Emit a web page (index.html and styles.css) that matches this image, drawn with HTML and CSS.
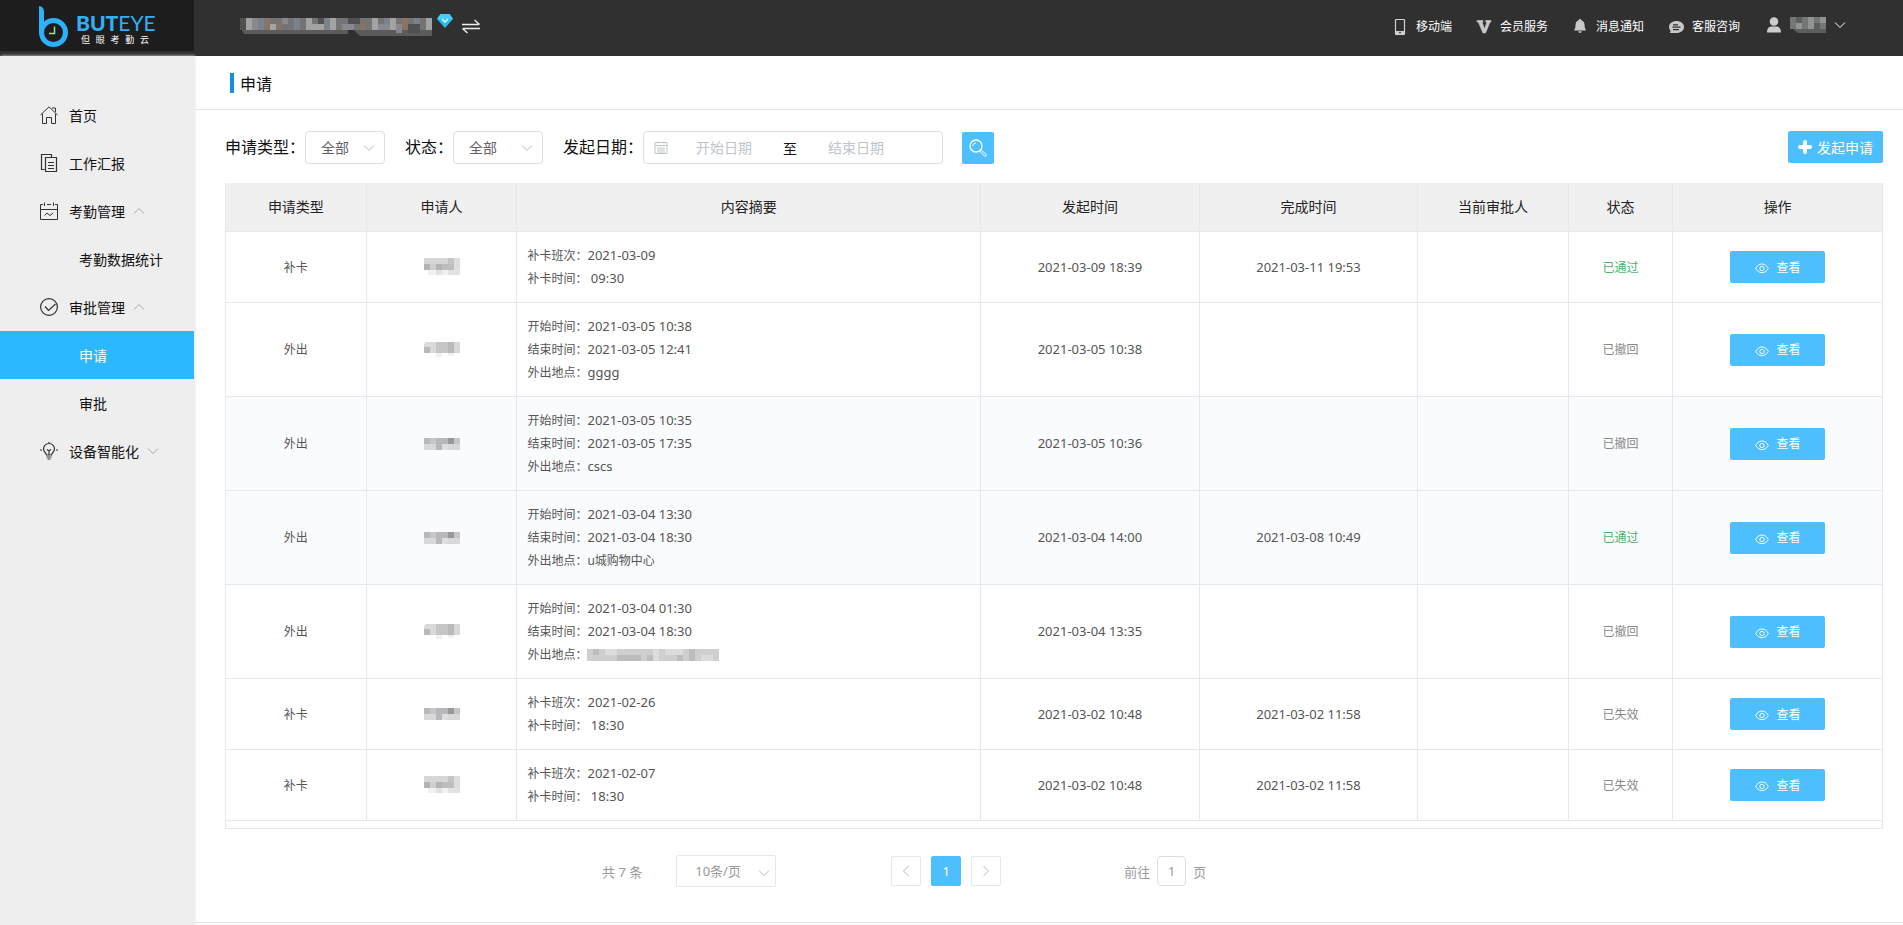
FILE: index.html
```html
<!DOCTYPE html>
<html lang="zh-CN">
<head>
<meta charset="utf-8">
<title>申请</title>
<link rel="stylesheet" href="styles.css">
</head>
<body>
<svg class="defs" aria-hidden="true">
  <symbol id="down" viewBox="0 0 12 12"><path d="M1 3.500l5 5 5-5" fill="none" stroke="currentColor"/></symbol>
  <symbol id="up" viewBox="0 0 12 12"><path d="M1 8.500l5-5 5 5" fill="none" stroke="currentColor"/></symbol>
  <symbol id="eye" viewBox="0 0 14 14"><g fill="none" stroke="currentColor"><path d="M.7 8.500C3.500 2.500 10.500 2.500 13.300 8.500 10.500 14 3.500 14 .7 8.500z"/><circle cx="7" cy="8.500" r="2.200"/></g></symbol>
  <symbol id="name-a" viewBox="0 0 36 18">
    <path fill="#d6d6d6" d="M0 0h24v6H0z"/><path fill="#c4c4c4" d="M24 0h6v6h-6z"/><path fill="#dedede" d="M30 0h6v12h-6z"/>
    <path fill="#b4b4b4" d="M0 6h6v6H0zM12 6h6v6h-6z"/><path fill="#cfcfcf" d="M6 6h6v6H6z"/><path fill="#bdbdbd" d="M18 6h12v6H18z"/>
    <path fill="#f1f1f1" d="M4 12h8v5H4zM18 12h6v5h-6z"/><path fill="#e2e2e2" d="M12 12h6v5h-6zM24 12h12v5H24z"/>
  </symbol>
  <symbol id="name-b" viewBox="0 0 36 18">
    <path fill="#dadada" d="M2 1h10v5H0V3z"/><path fill="#c6c6c6" d="M12 1h18v11H12z"/><path fill="#b9b9b9" d="M0 6h6v6H0zM24 1h6v11h-6z"/>
    <path fill="#d8d8d8" d="M6 6h6v6H6zM30 1h6v11h-6z"/><path fill="#f1f1f1" d="M12 12h6v4h-6zM24 12h6v3h-6z"/>
  </symbol>
  <symbol id="name-c" viewBox="0 0 36 18">
    <path fill="#b8b8ba" d="M0 3h6v6H0zM12 3h12v6H12z"/><path fill="#c6c6c8" d="M6 3h6v6H6zM30 3h6v6h-6z"/><path fill="#98989c" d="M24 3h6v6h-6z"/>
    <path fill="#d8d8da" d="M0 9h12v6H0zM24 9h12v6H24z"/><path fill="#b9b9bb" d="M12 9h6v6h-6z"/><path fill="#dfdfe1" d="M18 9h6v6h-6z"/>
  </symbol>
</svg>

<header class="topbar">
  <a class="logo" href="#" aria-label="BUTEYE 但眼考勤云">
    <svg class="logo-mark" viewBox="0 0 30 42" aria-hidden="true">
      <path d="M0 0C3 .5 5 2 5 6v14l-5 7z" fill="#2cb1fc"/>
      <circle cx="14.500" cy="26.500" r="12" fill="none" stroke="#2cb1fc" stroke-width="5"/>
      <path d="M15.500 20.500v7H10" fill="none" stroke="#9fdc9a" stroke-width="1.500"/>
    </svg>
    <span class="logo-text">
      <span class="logo-name"><b>BUT</b>EYE</span>
      <span class="logo-sub"><span>但</span><span>眼</span><span>考</span><span>勤</span><span>云</span></span>
    </span>
  </a>
  <div class="company">
    <svg class="company-name" viewBox="0 0 192 18" aria-hidden="true">
      <path fill="#747474" d="M0 0h192v12H0z"/><path fill="#5b5b5b" d="M2 12h106v4H4zM114 12h78v6h-72z"/>
      <path fill="#505050" d="M0 0h6v12H0zM24 0h6v6h-6zM78 0h6v12h-6zM108 0h12v6h-12zM168 6h12v9h-12z"/>
      <path fill="#a3a3a1" d="M6 0h6v12H6zM30 6h6v6h-6zM66 0h6v12h-6zM72 6h12v6H72zM90 0h6v12h-6zM132 0h6v12h-6zM150 0h6v12h-6zM186 0h6v12h-6z"/>
      <path fill="#8a8791" d="M12 0h6v12h-6zM42 0h6v6h-6zM102 6h12v6h-12zM138 6h12v6h-12zM156 6h6v9h-6z"/>
      <path fill="#877467" d="M24 0h6v12h-6zM36 6h6v6h-6zM120 6h6v6h-6zM162 0h6v12h-6z"/>
      <path fill="#77848d" d="M18 0h6v12h-6zM54 0h6v12h-6zM84 0h6v12h-6zM144 0h6v6h-6zM174 0h6v6h-6z"/>
    </svg>
    <svg class="gem" viewBox="0 0 16 14" aria-hidden="true"><path d="M3.500 0h9L16 5 8 14 0 5z" fill="#25bdf3"/><path d="M3.500 0h9L16 5H0z" fill="#45d0fb"/><path d="M5 5l3 3 3-3" fill="none" stroke="#fff" stroke-width="1.300"/></svg>
    <button class="switch" type="button" aria-label="切换企业"><svg viewBox="0 0 18 16" aria-hidden="true"><path d="M0 5.500h17M12.500 1l5 4.500M18 9.500H1M5.500 14l-5-4.500" fill="none" stroke="#ededed" stroke-width="1.400"/></svg></button>
  </div>
  <nav class="top-links" aria-label="快捷入口">
    <a href="#"><svg viewBox="0 0 16 16" aria-hidden="true"><path d="M4.500.5h7a1 1 0 0 1 1 1v13a1 1 0 0 1-1 1h-7a1 1 0 0 1-1-1v-13a1 1 0 0 1 1-1zM4 12.500h8" fill="none" stroke="#d0d0d0" stroke-width="1.200"/><path d="M4 12h8v3H4z" fill="#ccc"/><circle cx="8" cy="13.600" r=".9" fill="#303030"/></svg>移动端</a>
    <a href="#"><svg viewBox="0 0 16 16" aria-hidden="true"><path d="M1 1.500h6V3H6l2.500 7L11 3H9.700V1.500H15V3h-1L9.500 14H7L2.300 3H1z" fill="#c8c8c8" stroke="#c8c8c8" stroke-width=".6"/></svg>会员服务</a>
    <a href="#"><svg viewBox="0 0 16 16" aria-hidden="true"><path d="M8 0a1.300 1.300 0 0 1 1.300 1.300C11.500 2 12.600 3.500 12.600 6.500c0 2 .5 3.200 1.500 5H2c1-1.800 1.500-3 1.500-5 0-3 1-4.500 3.200-5.200A1.300 1.300 0 0 1 8 0zM6.300 12.300h3.400a1.700 1.700 0 0 1-3.400 0z" fill="#c8c8c8"/></svg>消息通知</a>
    <a href="#"><svg viewBox="0 0 16 16" aria-hidden="true"><path d="M8.500 2c4.200 0 7.500 2.500 7.500 6s-3.300 6-7.500 6H2l.6-2.300C1.500 10.600 1 9.500 1 8c0-3.500 3.300-6 7.500-6z" fill="#c8c8c8"/><path d="M5 5.800h5M4.500 8.200h8M5 10.600h6" stroke="#303030" stroke-width="1.200"/></svg>客服咨询</a>
    <button class="user" type="button" aria-label="账户">
      <svg viewBox="0 0 16 16" aria-hidden="true"><circle cx="8" cy="4.500" r="4.300" fill="#ccc"/><path d="M1 15.500c0-4 2-6 4.500-6h5c2.500 0 4.500 2 4.500 6z" fill="#ccc"/></svg>
      <svg class="user-name" viewBox="0 0 36 18" aria-hidden="true"><path fill="#747676" d="M0 1h36v12H0z"/><path fill="#929494" d="M6 7h6v6H6zM18 1h6v12h-6zM30 1h6v6h-6z"/><path fill="#5c5e5e" d="M6 1h6v6H6zM24 7h6v6h-6zM3 13h33v4H8z"/></svg>
      <svg class="user-arrow" aria-hidden="true"><use href="#down"/></svg>
    </button>
  </nav>
</header>

<div class="shell">
  <nav class="sidebar" aria-label="主菜单">
    <a href="#"><svg class="icon" viewBox="0 0 18 18" aria-hidden="true"><path d="M.5 9L9 .8 17.500 9M2.500 7.500v10h4v-6h5v6h4v-10M12 2h3.500v4" fill="none" stroke="#333"/></svg>首页</a>
    <a href="#"><svg class="icon" viewBox="0 0 18 18" aria-hidden="true"><path d="M4.500 15.500h-3v-15h10v3M5.500 3.500h11v14h-11zM8 8.500h6M8 11.500h6M8 14.500h6" fill="none" stroke="#333" stroke-width="1.200"/></svg>工作汇报</a>
    <a href="#"><svg class="icon" viewBox="0 0 18 18" aria-hidden="true"><path d="M3 2.500H.5v15h17v-15H15M7 2.500h4M.5 7.500h17M4.500.5v3.500M13.500.5v3.500M4.500 13.500l2.500-2.500 3 2.500 3-2.500" fill="none" stroke="#333"/></svg>考勤管理<svg class="caret" aria-hidden="true"><use href="#up"/></svg></a>
    <a class="sub" href="#">考勤数据统计</a>
    <a href="#"><svg class="icon" viewBox="0 0 18 18" aria-hidden="true"><circle cx="9" cy="9" r="8.400" fill="none" stroke="#333" stroke-width="1.200"/><path d="M5 8.500l3.500 4 7-6.500" fill="none" stroke="#333" stroke-width="1.200"/></svg>审批管理<svg class="caret" aria-hidden="true"><use href="#up"/></svg></a>
    <a class="sub active" href="#" aria-current="page">申请</a>
    <a class="sub" href="#">审批</a>
    <a href="#"><svg class="icon" viewBox="0 0 18 18" aria-hidden="true"><path d="M6.500 13c0-2-3-2.800-3-6a5.500 5.500 0 0 1 11 0c0 3.200-3 4-3 6zM6.500 15h5M7.500 17h3M9 0v1M0 8h2M16 8h2M9 13V9M7 7.500L9 9l2-1.500" fill="none" stroke="#333" stroke-width="1.200"/></svg>设备智能化<svg class="caret" aria-hidden="true"><use href="#down"/></svg></a>
  </nav>

  <main class="main">
    <h1 class="title">申请</h1>
    <div class="content">
      <form class="filters">
        <label for="type">申请类型：</label>
        <span class="select type"><select id="type"><option>全部</option></select><svg aria-hidden="true"><use href="#down"/></svg></span>
        <label for="state">状态：</label>
        <span class="select state"><select id="state"><option>全部</option></select><svg aria-hidden="true"><use href="#down"/></svg></span>
        <label for="from">发起日期：</label>
        <span class="range">
          <svg viewBox="0 0 14 14" aria-hidden="true"><path d="M1 1.500h12v11H1zM1 4.500h12M3 7h8M3 9h8M3 11h8M4 .5v2M10 .5v2" fill="none" stroke="#c0c4cc"/></svg>
          <input id="from" type="text" placeholder="开始日期"><span class="to">至</span><input type="text" placeholder="结束日期" aria-label="结束日期">
        </span>
        <button class="search" type="button" aria-label="搜索"><svg viewBox="0 0 18 18" aria-hidden="true"><circle cx="7" cy="7" r="6" fill="none" stroke="#fff" stroke-width="1.300"/><path d="M3.800 7A3.200 3.200 0 0 1 7 3.800" fill="none" stroke="#fff"/><path d="M10.800 12l1.200-1.200 5 4.500a1 1 0 0 1-1.700 1.700z" fill="none" stroke="#fff"/></svg></button>
        <button class="create" type="button"><svg viewBox="0 0 14 14" aria-hidden="true"><path d="M7 2v10M2 7h10" stroke="#fff" stroke-width="4" stroke-linecap="round"/></svg>发起申请</button>
      </form>

      <div class="table-wrap">
      <table>
        <colgroup><col class="c-type"><col class="c-who"><col class="c-text"><col class="c-time"><col class="c-time"><col class="c-who"><col class="c-state"><col></colgroup>
        <thead><tr><th>申请类型</th><th>申请人</th><th>内容摘要</th><th>发起时间</th><th>完成时间</th><th>当前审批人</th><th>状态</th><th>操作</th></tr></thead>
        <tbody>
          <tr><td>补卡</td><td><svg class="name" aria-hidden="true"><use href="#name-a"/></svg></td>
            <td class="text"><p>补卡班次：<span>2021-03-09</span></p><p>补卡时间：<span>&nbsp;09:30</span></p></td>
            <td class="num">2021-03-09 18:39</td><td class="num">2021-03-11 19:53</td><td></td><td class="ok">已通过</td>
            <td><button class="view" type="button"><svg aria-hidden="true"><use href="#eye"/></svg>查看</button></td></tr>
          <tr><td>外出</td><td><svg class="name" aria-hidden="true"><use href="#name-b"/></svg></td>
            <td class="text"><p>开始时间：<span>2021-03-05 10:38</span></p><p>结束时间：<span>2021-03-05 12:41</span></p><p>外出地点：<span>gggg</span></p></td>
            <td class="num">2021-03-05 10:38</td><td></td><td></td><td class="off">已撤回</td>
            <td><button class="view" type="button"><svg aria-hidden="true"><use href="#eye"/></svg>查看</button></td></tr>
          <tr class="tint"><td>外出</td><td><svg class="name" aria-hidden="true"><use href="#name-c"/></svg></td>
            <td class="text"><p>开始时间：<span>2021-03-05 10:35</span></p><p>结束时间：<span>2021-03-05 17:35</span></p><p>外出地点：<span>cscs</span></p></td>
            <td class="num">2021-03-05 10:36</td><td></td><td></td><td class="off">已撤回</td>
            <td><button class="view" type="button"><svg aria-hidden="true"><use href="#eye"/></svg>查看</button></td></tr>
          <tr class="tint"><td>外出</td><td><svg class="name" aria-hidden="true"><use href="#name-c"/></svg></td>
            <td class="text"><p>开始时间：<span>2021-03-04 13:30</span></p><p>结束时间：<span>2021-03-04 18:30</span></p><p>外出地点：u城购物中心</p></td>
            <td class="num">2021-03-04 14:00</td><td class="num">2021-03-08 10:49</td><td></td><td class="ok">已通过</td>
            <td><button class="view" type="button"><svg aria-hidden="true"><use href="#eye"/></svg>查看</button></td></tr>
          <tr><td>外出</td><td><svg class="name" aria-hidden="true"><use href="#name-b"/></svg></td>
            <td class="text"><p>开始时间：<span>2021-03-04 01:30</span></p><p>结束时间：<span>2021-03-04 18:30</span></p><p>外出地点：<svg class="place" viewBox="0 0 132 12" aria-hidden="true"><path fill="#cfcfcf" d="M0 0h132v12H0z"/><path fill="#bdbdbd" d="M6 0h6v6H6zM30 6h6v6h-6zM36 6h18v6H36zM60 6h6v6h-6zM90 6h6v6h-6zM102 0h6v12h-6z"/><path fill="#dcdcdc" d="M18 0h12v6H18zM66 0h6v12h-6zM78 0h18v6H78zM114 6h12v6h-12z"/></svg></p></td>
            <td class="num">2021-03-04 13:35</td><td></td><td></td><td class="off">已撤回</td>
            <td><button class="view" type="button"><svg aria-hidden="true"><use href="#eye"/></svg>查看</button></td></tr>
          <tr><td>补卡</td><td><svg class="name" aria-hidden="true"><use href="#name-c"/></svg></td>
            <td class="text"><p>补卡班次：<span>2021-02-26</span></p><p>补卡时间：<span>&nbsp;18:30</span></p></td>
            <td class="num">2021-03-02 10:48</td><td class="num">2021-03-02 11:58</td><td></td><td class="off">已失效</td>
            <td><button class="view" type="button"><svg aria-hidden="true"><use href="#eye"/></svg>查看</button></td></tr>
          <tr><td>补卡</td><td><svg class="name" aria-hidden="true"><use href="#name-a"/></svg></td>
            <td class="text"><p>补卡班次：<span>2021-02-07</span></p><p>补卡时间：<span>&nbsp;18:30</span></p></td>
            <td class="num">2021-03-02 10:48</td><td class="num">2021-03-02 11:58</td><td></td><td class="off">已失效</td>
            <td><button class="view" type="button"><svg aria-hidden="true"><use href="#eye"/></svg>查看</button></td></tr>
        </tbody>
      </table>
      </div>

      <div class="pager">
        <span>共 7 条</span>
        <span class="select size"><select aria-label="每页条数"><option>10条/页</option></select><svg aria-hidden="true"><use href="#down"/></svg></span>
        <div class="pages">
          <button type="button" aria-label="上一页"><svg viewBox="0 0 12 12" aria-hidden="true"><path d="M8.500 1l-5 5 5 5" fill="none" stroke="currentColor"/></svg></button>
          <button class="current" type="button">1</button>
          <button type="button" aria-label="下一页"><svg viewBox="0 0 12 12" aria-hidden="true"><path d="M3.500 1l5 5-5 5" fill="none" stroke="currentColor"/></svg></button>
        </div>
        <label class="jump">前往<input type="text" value="1">页</label>
      </div>
    </div>
  </main>
</div>
</body>
</html>
```
FILE: styles.css
```css
* { box-sizing: border-box; }

body {
  margin: 0;
  min-height: 100vh;
  display: flex;
  flex-direction: column;
  background: #fff;
  color: #111;
  font-family: "Noto Sans", "Noto Sans CJK SC", sans-serif;
  font-size: 14px;
}

a { color: inherit; text-decoration: none; }
button, input, select { font: inherit; color: inherit; margin: 0; }
button { border: 0; padding: 0; background: none; cursor: pointer; }
svg { display: block; flex: none; }
.defs { position: absolute; width: 0; height: 0; }

/* Top bar */
.topbar { display: flex; height: 56px; background: #303030; color: #fff; }
.logo {
  display: flex;
  gap: 7px;
  width: 194px;
  height: 51px;
  padding: 6px 0 0 39px;
  background: #1d1d1d;
}
.logo-mark { width: 30px; height: 42px; }
.logo-text { display: flex; flex-direction: column; width: 78px; padding-top: 5px; }
.logo-name { font: 400 21px/24px Lato, sans-serif; color: #35aef5; }
.logo-name b { font-weight: 900; }
.logo-sub { display: flex; justify-content: space-between; padding: 0 5px; font-size: 9px; line-height: 10px; }
.company { display: flex; align-items: flex-start; padding: 14px 0 0 46px; }
.company-name { width: 192px; height: 18px; margin-top: 4px; }
.gem { width: 16px; height: 14px; margin-left: 5px; }
.switch { margin: 5px 0 0 9px; }
.switch svg { width: 18px; height: 16px; }
.top-links { display: flex; align-items: flex-start; gap: 24px; margin-left: auto; padding: 16px 57px 0 0; font-size: 12px; line-height: 20px; }
.top-links a, .user { display: flex; align-items: center; gap: 8px; }
.top-links a { padding-top: 1px; }
.user { margin-left: 2px; }
.top-links svg { width: 16px; height: 16px; }
.top-links .user-name { width: 36px; height: 18px; }
.top-links .user-arrow { width: 12px; height: 12px; }

/* Sidebar */
.shell { display: flex; flex: 1; }
.sidebar { width: 194px; flex: none; padding-top: 35px; background: #eee; box-shadow: 1px 0 3px #e4e4e4; }
.sidebar a { display: flex; align-items: center; height: 48px; padding-left: 40px; }
.sidebar .icon { width: 18px; height: 18px; margin-right: 11px; }
.sidebar .caret { width: 12px; height: 12px; margin-left: 8px; color: #aaa; }
.sidebar .sub { padding-left: 79px; }
.sidebar .active { background: #2db7ff; color: #fff; }

/* Page */
.main { flex: 1; min-width: 0; }
.title {
  display: flex;
  align-items: center;
  gap: 6px;
  height: 54px;
  margin: 0;
  padding-left: 36px;
  border-bottom: 1px solid #e6e6e6;
  font-size: 16px;
  font-weight: 400;
}
.title::before { content: ""; width: 4px; height: 20px; background: #1790dc; }
.content { padding: 21px 20px 35px 31px; border-bottom: 1px solid #e4e4e4; }

.filters { display: flex; align-items: flex-start; margin-bottom: 19px; }
.filters label { font-size: 16px; line-height: 33px; }
.select { position: relative; display: flex; margin-right: 20px; color: #606266; }
.select select {
  width: 100%;
  height: 33px;
  padding: 0 15px;
  border: 1px solid #dcdfe6;
  border-radius: 4px;
  background: #fff;
  appearance: none;
}
.select svg { position: absolute; right: 10px; top: 11px; width: 12px; height: 12px; color: #b4b8bf; pointer-events: none; }
.type { width: 80px; }
.state { width: 90px; }
.range { display: flex; align-items: center; width: 300px; height: 33px; padding-left: 10px; border: 1px solid #dcdfe6; border-radius: 4px; }
.range svg { width: 14px; height: 14px; }
.range input { width: 112px; border: 0; padding: 0; background: none; text-align: center; outline: 0; }
.range input::placeholder { color: #c0c4cc; }
.range .to { width: 20px; text-align: center; }
.search { display: grid; place-items: center; align-self: flex-end; width: 32px; height: 32px; margin-left: 19px; border-radius: 2px; background: #4dbfff; }
.search svg { width: 18px; height: 18px; }
.create { display: flex; align-items: center; gap: 5px; height: 32px; margin-left: auto; padding: 0 10px; border-radius: 2px; background: #4dbfff; color: #fff; }
.create svg { width: 14px; height: 14px; }

/* Table */
.table-wrap { padding-bottom: 7px; border: solid #e6e8ee; border-width: 0 1px 1px 1px; }
table { width: 100%; table-layout: fixed; border-spacing: 0; color: #555; font-size: 12px; }
.c-type { width: 8.500%; }
.c-who { width: 9.100%; }
.c-text { width: 28%; }
.c-time { width: 13.200%; }
.c-state { width: 6.300%; }
th, td { padding: 12px 10px; border: solid #e6e8ee; border-width: 0 1px 1px 0; text-align: center; line-height: 23px; }
th { background: #f0f0f0; color: #222; font-size: 14px; font-weight: 400; line-height: 24px; }
th:last-child, td:last-child { border-right: 0; }
td.text { text-align: left; }
.num, .text span { font-size: 13px; }
.text p { display: flex; align-items: center; height: 23px; margin: 0; }
.tint { background: #fafbfc; }
.ok { color: #4bb26a; }
.off { color: #888; }
.name { width: 36px; height: 18px; margin: 0 auto; }
.place { width: 132px; height: 12px; }
.view { display: flex; align-items: center; justify-content: center; gap: 8px; width: 95px; height: 32px; margin: 0 auto; border-radius: 2px; background: #4dbfff; color: #fff; }
.view svg { width: 14px; height: 14px; }

/* Pagination */
.pager { display: flex; align-items: center; margin-top: 26px; padding-left: 377px; color: #999; font-size: 13px; }
.pager .size { width: 100px; margin: 0 115px 0 34px; color: #999; }
.size select { height: 32px; padding: 0 18px; border-color: #e6e8ee; border-radius: 2px; }
.size svg { right: 6px; top: 12px; }
.pages { display: flex; gap: 10px; }
.pages button { display: grid; place-items: center; width: 30px; height: 30px; border: 1px solid #e6e8ee; border-radius: 2px; color: #bbb; }
.pages svg { width: 12px; height: 12px; }
.pages .current { border-color: #4dbfff; background: #4dbfff; color: #fff; }
.jump { display: flex; align-items: center; gap: 7px; margin-left: 123px; }
.jump input { width: 29px; height: 30px; padding: 0; border: 1px solid #dcdfe6; border-radius: 4px; text-align: center; }
```
